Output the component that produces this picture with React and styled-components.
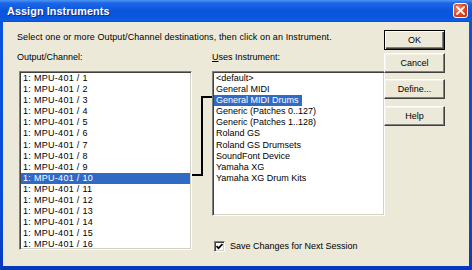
import React from 'react';
import styled, { createGlobalStyle } from 'styled-components';

const GlobalStyle = createGlobalStyle`
  html, body { margin: 0; padding: 0; background: #ECE9D8; }
  body { font-family: "Liberation Sans", Arial, sans-serif; }
  * { box-sizing: border-box; }
`;

const Window = styled.div`
  width: 472px;
  height: 270px;
  display: flex;
  flex-direction: column;
  background: linear-gradient(to bottom, #0B55DC, #0A48D2 85%, #0838B8);
  overflow: hidden;
`;

const TitleBar = styled.div`
  height: 22px;
  flex: none;
  display: flex;
  align-items: center;
  justify-content: space-between;
  padding: 0 4px 0 7px;
  background: linear-gradient(
    to bottom,
    #4A96F6 0%,
    #1E66E6 14%,
    #0A57DE 45%,
    #0A55DA 80%,
    #0B5FE8 92%,
    #0A4ACB 100%
  );
`;

const Title = styled.span`
  color: #fff;
  font-weight: bold;
  font-size: 10.8px;
  letter-spacing: 0.1px;
  text-shadow: 1px 1px 0 #0A2C8A;
`;

const CloseButton = styled.div`
  width: 15px;
  height: 15px;
  margin-top: -2px;
  border: 1px solid #fff;
  border-radius: 3px;
  background: radial-gradient(circle at 35% 35%, #F08A6A, #D8401C 60%, #C0300E);
  display: flex;
  align-items: center;
  justify-content: center;
`;

const Body = styled.div`
  flex: 1;
  margin: 0 3px 4px;
  background: #ECE9D8;
  display: flex;
`;

const Main = styled.div`
  width: 368px;
  padding: 10px 0 0 14px;
  display: flex;
  flex-direction: column;
`;

const SmallText = styled.div`
  font-size: 9px;
  line-height: 11px;
  color: #000;
  white-space: nowrap;
`;

const Instruction = styled(SmallText)`
  margin-bottom: 9px;
  letter-spacing: 0.1px;
`;

const ListsGrid = styled.div`
  display: grid;
  grid-template-columns: 175px 20px 173px;
  grid-template-rows: 11px auto;
  row-gap: 8px;
`;

const Label = styled(SmallText)`
  grid-row: 1;
  grid-column: ${(p) => p.$col};
`;

const Accel = styled.span`
  text-decoration: underline;
`;

const ListBox = styled.div`
  grid-row: 2;
  width: 173px;
  height: ${(p) => p.$height}px;
  margin-left: ${(p) => p.$offset || 0}px;
  background: #fff;
  border: 1px solid;
  border-color: #7F7F7F #FFFFFF #FFFFFF #7F7F7F;
  box-shadow: inset 1px 1px 0 #404040, inset -1px -1px 0 #D4D0C8;
  padding: 1px 1px 0;
  overflow: hidden;
`;

const Item = styled.div`
  height: 11.1px;
  line-height: 11.1px;
  font-size: 9px;
  padding-left: 2px;
  white-space: nowrap;
  letter-spacing: ${(p) => (p.$wide ? '0.3px' : '0')};
  width: ${(p) => (p.$fit ? '88px' : 'auto')};
  color: ${(p) => (p.$selected ? '#fff' : '#000')};
  background: ${(p) => (p.$selected ? '#316AC5' : 'transparent')};
`;

const Gutter = styled.div`
  grid-row: 2;
  grid-column: 2;
  position: relative;
`;

const Connector = styled.svg`
  position: absolute;
  left: 0;
  top: 0;
`;

const RightColumn = styled.div`
  grid-row: 2;
  grid-column: 3;
  display: flex;
  flex-direction: column;
`;

const CheckRow = styled.label`
  margin: 25px 0 0 2px;
  display: flex;
  align-items: center;
  gap: 5px;
`;

const CheckBox = styled.span`
  width: 11px;
  height: 11px;
  background: #fff;
  border: 1px solid;
  border-color: #7F7F7F #fff #fff #7F7F7F;
  box-shadow: inset 1px 1px 0 #404040, inset -1px -1px 0 #D4D0C8;
  display: flex;
  align-items: center;
  justify-content: center;
`;

const ButtonColumn = styled.div`
  margin-left: 13px;
  padding-top: 8px;
  width: 61px;
  display: flex;
  flex-direction: column;
`;

const Button = styled.div`
  height: 20px;
  margin-top: ${(p) => p.$space || 0}px;
  font-size: 9px;
  display: flex;
  align-items: center;
  justify-content: center;
  background: #ECE9D8;
  color: #000;
  border: 1px solid;
  border-color: ${(p) => (p.$default ? '#000' : '#fff #404040 #404040 #fff')};
  box-shadow: ${(p) =>
    p.$default
      ? 'inset 1px 1px 0 #fff, inset -1px -1px 0 #404040, inset -2px -2px 0 #808080'
      : 'inset -1px -1px 0 #808080, inset 1px 1px 0 #F4F2EA'};
`;

const channels = Array.from({ length: 16 }, (_, i) => `1: MPU-401 / ${i + 1}`);
const instruments = [
  '<default>',
  'General MIDI',
  'General MIDI Drums',
  'Generic (Patches 0..127)',
  'Generic (Patches 1..128)',
  'Roland GS',
  'Roland GS Drumsets',
  'SoundFont Device',
  'Yamaha XG',
  'Yamaha XG Drum Kits',
];

export default function App() {
  return (
    <>
      <GlobalStyle />
      <Window>
        <TitleBar>
          <Title>Assign Instruments</Title>
          <CloseButton>
            <svg width="9" height="9" viewBox="0 0 9 9">
              <path d="M1 1 L8 8 M8 1 L1 8" stroke="#fff" strokeWidth="1.8" strokeLinecap="square" />
            </svg>
          </CloseButton>
        </TitleBar>
        <Body>
          <Main>
            <Instruction>
              Select one or more Output/Channel destinations, then click on an Instrument.
            </Instruction>
            <ListsGrid>
              <Label $col={1}>Output/Channel:</Label>
              <Label $col={3}>
                <Accel>U</Accel>ses Instrument:
              </Label>
              <ListBox $height={179} $offset={2}>
                {channels.map((c, i) => (
                  <Item key={c} $wide $selected={i === 9}>
                    {c}
                  </Item>
                ))}
              </ListBox>
              <Gutter>
                <Connector width="20" height="120" viewBox="0 0 20 120">
                  <path d="M0 104 H10 V26 H20" fill="none" stroke="#000" strokeWidth="2" />
                </Connector>
              </Gutter>
              <RightColumn>
                <ListBox $height={145}>
                  {instruments.map((t, i) => (
                    <Item key={t} $fit $selected={i === 2}>
                      {t}
                    </Item>
                  ))}
                </ListBox>
                <CheckRow>
                  <CheckBox>
                    <svg width="7" height="7" viewBox="0 0 7 7">
                      <path d="M0.5 3 L2.5 5.2 L6.5 1" fill="none" stroke="#000" strokeWidth="1.7" />
                    </svg>
                  </CheckBox>
                  <SmallText>Save Changes for Next Session</SmallText>
                </CheckRow>
              </RightColumn>
            </ListsGrid>
          </Main>
          <ButtonColumn>
            <Button $default>OK</Button>
            <Button $space={3}>Cancel</Button>
            <Button $space={6}>Define...</Button>
            <Button $space={7}>Help</Button>
          </ButtonColumn>
        </Body>
      </Window>
    </>
  );
}
